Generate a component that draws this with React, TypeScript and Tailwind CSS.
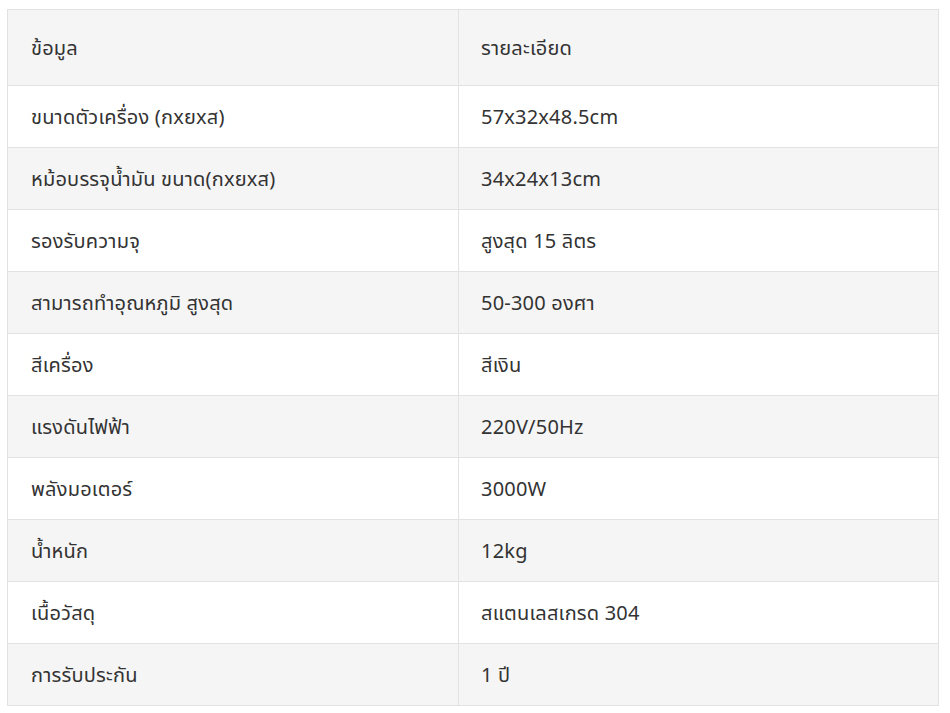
const rows: [string, string][] = [
  ["ขนาดตัวเครื่อง (กxยxส)", "57x32x48.5cm"],
  ["หม้อบรรจุน้ำมัน ขนาด(กxยxส)", "34x24x13cm"],
  ["รองรับความจุ", "สูงสุด 15 ลิตร"],
  ["สามารถทำอุณหภูมิ สูงสุด", "50-300 องศา"],
  ["สีเครื่อง", "สีเงิน"],
  ["แรงดันไฟฟ้า", "220V/50Hz"],
  ["พลังมอเตอร์", "3000W"],
  ["น้ำหนัก", "12kg"],
  ["เนื้อวัสดุ", "สแตนเลสเกรด 304"],
  ["การรับประกัน", "1 ปี"],
];

export default function App() {
  return (
    <div className="bg-white w-[950px] h-[713px] pt-[9px] pl-[7px]">
      <table
        className="w-[932px] border-collapse text-[20px] tracking-[0.2px] text-[#333] [font-family:'Noto_Sans','Noto_Sans_Thai',sans-serif]"
      >
        <tbody>
          <tr className="h-[76px] bg-[#f5f5f5]">
            <td className="w-[451px] border border-[#e2e2e2] pl-[23px] align-middle">ข้อมูล</td>
            <td className="border border-[#e2e2e2] pl-[22px] align-middle">รายละเอียด</td>
          </tr>
          {rows.map(([k, v], i) => (
            <tr key={k} className={`h-[62px] ${i % 2 === 1 ? "bg-[#f5f5f5]" : "bg-white"}`}>
              <td className="border border-[#e2e2e2] pl-[23px] align-middle">{k}</td>
              <td className="border border-[#e2e2e2] pl-[22px] align-middle">{v}</td>
            </tr>
          ))}
        </tbody>
      </table>
    </div>
  );
}
